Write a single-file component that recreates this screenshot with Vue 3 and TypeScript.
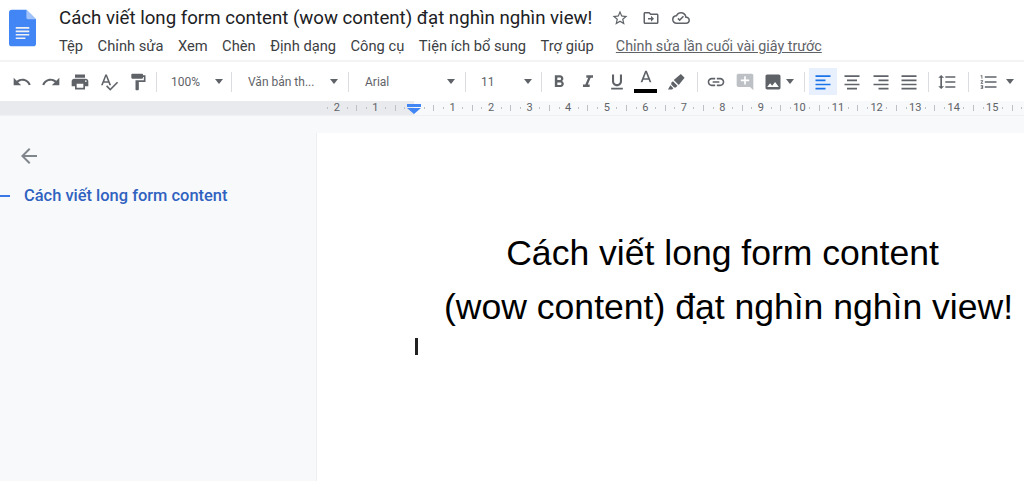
<script setup lang="ts">
const menus = ['Tệp', 'Chỉnh sửa', 'Xem', 'Chèn', 'Định dạng', 'Công cụ', 'Tiện ích bổ sung', 'Trợ giúp']
const pxPerInch = 38.55
const zero = 414
const marks: { x: number; label?: string; kind: string }[] = []
for (let n = -3; n <= 16; n++) {
  const base = zero + n * pxPerInch
  if (n !== 0) marks.push({ x: base, label: String(Math.abs(n)), kind: 'num' })
  marks.push({ x: base + pxPerInch / 4, kind: 'dot' })
  marks.push({ x: base + pxPerInch / 2, kind: 'bar' })
  marks.push({ x: base + (3 * pxPerInch) / 4, kind: 'dot' })
}
const visible = marks.filter((m) => m.x > 318 && m.x < 1024)
</script>

<template>
  <div class="app">
    <header class="top">
      <svg class="logo" width="27" height="38" viewBox="0 0 28 38">
        <path d="M3 0h15l10 10v25a3 3 0 0 1-3 3H3a3 3 0 0 1-3-3V3a3 3 0 0 1 3-3z" fill="#4285f4" />
        <path d="M18 0l10 10h-8a2 2 0 0 1-2-2z" fill="#a1c2fa" />
        <path d="M7 18h14v1.7H7zM7 21.6h14v1.7H7zM7 25.2h14v1.7H7zM7 28.8h10v1.7H7z" fill="#f1f1f1" />
      </svg>
      <div class="heading">
        <div class="title-row">
          <span class="title">Cách viết long form content (wow content) đạt nghìn nghìn view!</span>
          <svg class="ti star" width="18" height="18" viewBox="0 0 24 24"><path d="M22 9.24l-7.19-.62L12 2 9.19 8.63 2 9.24l5.46 4.73L5.82 21 12 17.27 18.18 21l-1.63-7.03L22 9.24zM12 15.4l-3.76 2.27 1-4.28-3.32-2.88 4.38-.38L12 6.1l1.71 4.04 4.38.38-3.32 2.88 1 4.28L12 15.4z" /></svg>
          <svg class="ti" width="18" height="18" viewBox="0 0 24 24"><path d="M20 6h-8l-2-2H4c-1.1 0-2 .9-2 2v12c0 1.1.9 2 2 2h16c1.1 0 2-.9 2-2V8c0-1.1-.9-2-2-2zm0 12H4V6h5.17l2 2H20v10zm-8-1l4-4-4-4v3H8v2h4v3z" /></svg>
          <svg class="ti" width="18" height="18" viewBox="0 0 24 24"><path d="M19.35 10.04A7.49 7.49 0 0 0 12 4C9.11 4 6.6 5.64 5.35 8.04A5.994 5.994 0 0 0 0 14c0 3.31 2.69 6 6 6h13c2.76 0 5-2.24 5-5 0-2.64-2.05-4.78-4.65-4.96zM19 18H6c-2.21 0-4-1.79-4-4 0-2.05 1.53-3.76 3.56-3.97l1.07-.11.5-.95A5.469 5.469 0 0 1 12 6c2.62 0 4.88 1.86 5.39 4.43l.3 1.5 1.53.11A2.98 2.98 0 0 1 22 15c0 1.65-1.35 3-3 3z" /><path d="M10.2 16.2l-3-3 1.4-1.4 1.6 1.6 4.4-4.4 1.4 1.4z" /></svg>
        </div>
        <nav class="menu">
          <span v-for="m in menus" :key="m">{{ m }}</span>
          <a class="saved">Chỉnh sửa lần cuối vài giây trước</a>
        </nav>
      </div>
    </header>

    <div class="toolbar">
      <button class="ic"><svg viewBox="0 0 24 24"><path d="M12.5 8c-2.65 0-5.05.99-6.9 2.6L2 7v9h9l-3.62-3.62c1.39-1.16 3.16-1.88 5.12-1.88 3.54 0 6.55 2.31 7.6 5.5l2.37-.78C21.08 11.03 17.15 8 12.5 8z" /></svg></button>
      <button class="ic"><svg viewBox="0 0 24 24"><path d="M18.4 10.6C16.55 8.99 14.15 8 11.5 8c-4.65 0-8.58 3.03-9.96 7.22L3.9 16c1.05-3.19 4.05-5.5 7.6-5.5 1.95 0 3.73.72 5.12 1.88L13 16h9V7l-3.6 3.6z" /></svg></button>
      <button class="ic"><svg viewBox="0 0 24 24"><path d="M19 8H5c-1.66 0-3 1.34-3 3v6h4v4h12v-4h4v-6c0-1.66-1.34-3-3-3zm-3 11H8v-5h8v5zm3-7c-.55 0-1-.45-1-1s.45-1 1-1 1 .45 1 1-.45 1-1 1zm-1-9H6v4h12V3z" /></svg></button>
      <button class="ic"><svg viewBox="0 0 24 24"><path d="M12.45 16h2.09L9.43 3H7.57L2.46 16h2.09l1.12-3h5.64l1.14 3zm-6.02-5L8.5 5.48 10.57 11H6.43zm15.16.59l-8.09 8.09L9.83 16l-1.41 1.41 5.09 5.09L23 13l-1.41-1.41z" /></svg></button>
      <button class="ic"><svg viewBox="0 0 24 24"><path d="M18 4V3c0-.55-.45-1-1-1H5c-.55 0-1 .45-1 1v4c0 .55.45 1 1 1h12c.55 0 1-.45 1-1V6h1v4H9v11c0 .55.45 1 1 1h2c.55 0 1-.45 1-1v-9h8V4h-3z" /></svg></button>
      <i class="sep"></i>
      <div class="select zoom"><span>100%</span><b></b></div>
      <i class="sep"></i>
      <div class="select style"><span>Văn bản th...</span><b></b></div>
      <i class="sep"></i>
      <div class="select font"><span>Arial</span><b></b></div>
      <i class="sep"></i>
      <div class="select size"><span>11</span><b></b></div>
      <i class="sep tight"></i>
      <button class="ic"><svg viewBox="0 0 24 24"><path d="M15.6 10.79c.97-.67 1.65-1.77 1.65-2.79 0-2.26-1.75-4-4-4H7v14h7.04c2.09 0 3.71-1.7 3.71-3.79 0-1.52-.86-2.82-2.15-3.42zM10 6.5h3c.83 0 1.5.67 1.5 1.5s-.67 1.5-1.5 1.5h-3v-3zm3.5 9H10v-3h3.5c.83 0 1.5.67 1.5 1.5s-.67 1.5-1.5 1.5z" /></svg></button>
      <button class="ic"><svg viewBox="0 0 24 24"><path d="M10 4v3h2.21l-3.42 8H6v3h8v-3h-2.21l3.42-8H18V4z" /></svg></button>
      <button class="ic"><svg viewBox="0 0 24 24"><path d="M12 17c3.31 0 6-2.69 6-6V3h-2.5v8c0 1.93-1.57 3.5-3.5 3.5S8.5 12.93 8.5 11V3H6v8c0 3.31 2.69 6 6 6zm-7 2v2h14v-2H5z" /></svg></button>
      <button class="ic color">
        <svg viewBox="0 0 24 24"><path d="M11 2L5.5 16h2.25l1.12-3h6.25l1.12 3h2.25L13 2h-2zm-1.38 9L12 4.67 14.38 11H9.62z" /></svg>
        <i class="swatch"></i>
      </button>
      <button class="ic"><svg viewBox="0 0 24 24"><path d="M19 2.5L23.5 7 16.5 15.5 10.5 9.5zM9.5 11L15 16.5 13 18.5 11 18.5 7.5 15 7.5 13zM6.5 16L10 19.5 8.500 21 3.500 21z" /></svg></button>
      <i class="sep wide"></i>
      <button class="ic"><svg viewBox="0 0 24 24"><path d="M3.9 12c0-1.71 1.39-3.1 3.1-3.1h4V7H7c-2.76 0-5 2.24-5 5s2.24 5 5 5h4v-1.9H7c-1.71 0-3.1-1.39-3.1-3.1zM8 13h8v-2H8v2zm9-6h-4v1.9h4c1.71 0 3.1 1.39 3.1 3.1s-1.39 3.1-3.1 3.1h-4V17h4c2.76 0 5-2.24 5-5s-2.24-5-5-5z" /></svg></button>
      <button class="ic faded"><svg viewBox="0 0 24 24"><path d="M20 2H4c-1.1 0-2 .9-2 2v12c0 1.1.9 2 2 2h14l4 4V4c0-1.1-.9-2-2-2zm-3 9h-4v4h-2v-4H7V9h4V5h2v4h4v2z" /></svg></button>
      <button class="ic img"><svg viewBox="0 0 24 24"><path d="M21 19V5c0-1.1-.9-2-2-2H5c-1.1 0-2 .9-2 2v14c0 1.1.9 2 2 2h14c1.1 0 2-.9 2-2zM8.5 13.5l2.5 3.01L14.5 12l4.5 6H5l3.5-4.5z" /></svg><b></b></button>
      <i class="sep"></i>
      <button class="ic active"><svg viewBox="0 0 24 24"><path d="M3 4h18v2H3zM3 9h12v2H3zM3 14h18v2H3zM3 19h12v2H3z" /></svg></button>
      <button class="ic"><svg viewBox="0 0 24 24"><path d="M3 4h18v2H3zM6 9h12v2H6zM3 14h18v2H3zM6 19h12v2H6z" /></svg></button>
      <button class="ic"><svg viewBox="0 0 24 24"><path d="M3 4h18v2H3zM9 9h12v2H9zM3 14h18v2H3zM9 19h12v2H9z" /></svg></button>
      <button class="ic"><svg viewBox="0 0 24 24"><path d="M3 4h18v2H3zM3 9h18v2H3zM3 14h18v2H3zM3 19h18v2H3z" /></svg></button>
      <i class="sep"></i>
      <button class="ic"><svg viewBox="0 0 24 24"><path d="M6 7h2.5L5 3.5 1.5 7H4v10H1.5L5 20.5 8.5 17H6V7zm4-2v2h12V5H10zm0 14h12v-2H10v2zm0-6h12v-2H10v2z" /></svg></button>
      <i class="sep mid"></i>
      <button class="ic list"><svg viewBox="0 0 24 24"><path d="M2 17h2v.5H3v1h1v.5H2v1h3v-4H2v1zm1-9h1V4H2v1h1v3zm-1 3h1.8L2 13.1v.9h3v-1H3.2L5 10.9V10H2v1zm5-6v2h14V5H7zm0 14h14v-2H7v2zm0-6h14v-2H7v2z" /></svg><b></b></button>
    </div>

    <div class="ruler">
      <div class="ruler-left"></div>
      <div class="ruler-track">
        <template v-for="m in visible" :key="m.x + m.kind">
          <span v-if="m.kind === 'num'" class="num" :style="{ left: m.x + 'px' }">{{ m.label }}</span>
          <i v-else :class="m.kind" :style="{ left: m.x + 'px' }"></i>
        </template>
        <svg class="indent" width="14" height="10" viewBox="0 0 14 10"><path d="M0 0h14v3H0z M0 4h14L7 10z" fill="#4285f4" /></svg>
      </div>
    </div>

    <main class="body">
      <aside class="outline">
        <svg class="back" width="24" height="24" viewBox="0 0 24 24"><path d="M20 11H7.83l5.59-5.59L12 4l-8 8 8 8 1.41-1.41L7.83 13H20v-2z" /></svg>
        <div class="heading-item"><i></i><span>Cách viết long form content</span></div>
      </aside>
      <section class="page">
        <h1>Cách viết long form content&nbsp;<br />(wow content) đạt nghìn nghìn view!</h1>
        <i class="caret"></i>
      </section>
    </main>
  </div>
</template>

<style>
html, body { margin: 0; overflow: hidden; }
</style>

<style scoped>
.app { width: 1024px; height: 481px; overflow: hidden; background: #f8f9fa; font-family: Roboto, "Liberation Sans", sans-serif; display: flex; flex-direction: column; }
.top { height: 60px; background: #fff; display: flex; padding: 9px 0 0 9px; box-sizing: border-box; flex: none; }
.logo { flex: none; margin-right: 23px; }
.heading { display: flex; flex-direction: column; }
.title-row { display: flex; align-items: center; height: 18px; }
.title { font-size: 18.66px; color: #202124; white-space: nowrap; margin-right: 19px; }
.ti { fill: #5f6368; margin-right: 12.5px; flex: none; }
.menu { display: flex; gap: 14.5px; font-size: 14.7px; color: #3c4043; margin-top: 10px; line-height: 18px; white-space: nowrap; }
.saved { color: #5f6368; text-decoration: underline; margin-left: 7.5px; font-size: 14.3px; }
.toolbar { flex: none; height: 41px; box-sizing: border-box; background: #fff; border-top: 2px solid #f1f3f4; display: flex; align-items: center; padding-left: 8px; }
.ic { border: 0; padding: 0; margin: 0; background: none; width: 28.8px; height: 27px; display: flex; align-items: center; justify-content: center; position: relative; flex: none; }
.ic svg { width: 20px; height: 20px; fill: #5f6368; flex: none; }
.ic.faded svg { fill: #bdc1c6; }
.ic.active { background: #e8f0fe; }
.ic.active svg { fill: #1a73e8; }
.ic.color svg { margin-top: -6px; }
.swatch { position: absolute; left: 3px; right: 3px; bottom: 2px; height: 4px; background: #000; }
.ic b, .select b { display: block; flex: none; width: 0; height: 0; border-left: 4.5px solid transparent; border-right: 4.5px solid transparent; border-top: 5px solid #5f6368; }
.ic.img { width: 40px; gap: 3px; justify-content: flex-start; padding-left: 3px; box-sizing: border-box; }
.ic.list { width: 48px; gap: 7px; justify-content: flex-start; padding-left: 6px; box-sizing: border-box; }
.sep { flex: none; width: 1px; height: 20px; background: #dadce0; margin: 0 4px; }
.sep.tight { margin-right: 3px; }
.sep.wide { margin-left: 8px; }
.sep.mid { margin-left: 6px; }
.select { flex: none; display: flex; align-items: center; justify-content: space-between; font-size: 12px; color: #5f6368; height: 27px; box-sizing: border-box; }
.zoom { width: 66px; padding: 0 3.5px 0 10px; }
.style { width: 108px; padding: 0 5.5px 0 12px; }
.font { width: 108px; padding: 0 5.5px 0 12px; }
.size { width: 67px; padding: 0 4.5px 0 11px; }
.ruler { flex: none; height: 15px; display: flex; box-sizing: border-box; position: relative; background: #f8f9fa; border-bottom: 1px solid #eef0f2; }
.ruler-left { width: 414px; flex: none; background: #e8eaed; }
.ruler-track { position: absolute; inset: 0; }
.num { position: absolute; top: 0; transform: translateX(-50%); font-size: 11px; line-height: 14px; color: #5f6368; }
.dot { position: absolute; top: 6px; width: 1px; height: 2px; background: #bdc1c6; }
.bar { position: absolute; top: 4px; width: 1px; height: 6px; background: #bdc1c6; }
.indent { position: absolute; left: 407px; top: 3px; }
.body { flex: 1; display: flex; min-height: 0; }
.outline { width: 316px; flex: none; box-sizing: border-box; padding-top: 28px; }
.back { display: block; margin-left: 17px; fill: #80868b; }
.heading-item { display: flex; align-items: center; margin-top: 20px; font-size: 16.45px; line-height: 16px; font-weight: 500; color: #2f62c0; white-space: nowrap; }
.heading-item i { width: 10px; height: 1.5px; background: #3b78e7; margin-right: 14px; }
.page { flex: 1; background: #fff; margin-top: 17px; border-left: 1px solid #eceef0; padding-top: 93px; position: relative; white-space: nowrap; }
h1 { margin: 0 0 0 127px; width: 567px; font: 400 35.55px/54px "Liberation Sans", Arial, sans-serif; color: #000; text-align: center; }
.caret { display: block; width: 2.5px; height: 17px; background: #222; margin: 4px 0 0 98px; }
</style>
